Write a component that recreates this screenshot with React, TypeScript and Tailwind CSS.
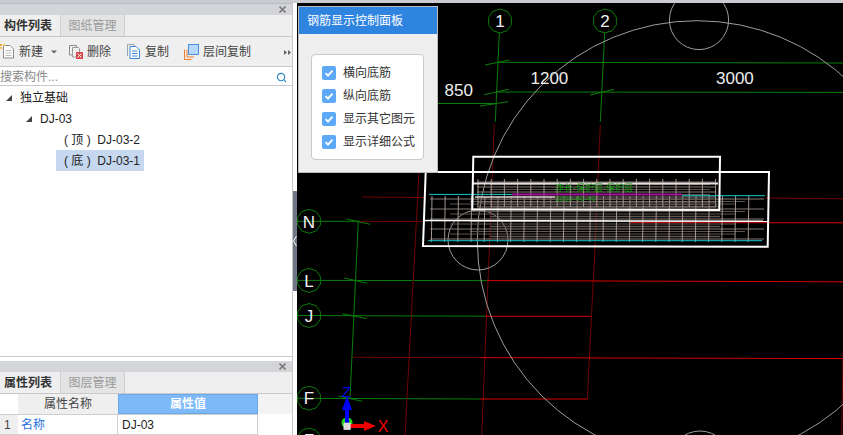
import React from "react";
import { Search } from "lucide-react";

const FONT = { fontFamily: '"Liberation Sans","Noto Sans CJK SC",sans-serif' };

function poly(cx: number, cy: number, r: number) {
  const pts: string[] = [];
  for (let i = 0; i < 10; i++) {
    const a = (i * Math.PI) / 5 - Math.PI / 2;
    pts.push(`${(cx + r * Math.cos(a)).toFixed(1)},${(cy + r * Math.sin(a)).toFixed(1)}`);
  }
  return pts.join(" ");
}

type L = [number, number, number, number];
const GREEN = "#0a7f0a";
const DRED = "#6e0505";
const RED = "#d80000";
const ARC = "#9c9c9c";

const greenLines: L[] = [
  [499.3, 32.7, 495.3, 121.7], [604.7, 32.7, 600.3, 121.7],
  [497, 62.3, 843, 63], [497, 92, 843, 92.4], [437, 103.5, 497, 103.5],
  [485, 65, 509.3, 60], [484, 94.7, 508.7, 89.3], [480, 106, 508.3, 101.7], [590, 95, 614, 89.3],
  [358.3, 221.3, 350, 398],
  [346.7, 219, 370, 224.3], [344.3, 278, 367.3, 283.3], [342.3, 313.7, 366.7, 318.7], [338.3, 396, 362.3, 401.3],
  [297, 221.3, 360, 221.3], [297, 280.4, 487, 280.6], [297, 315.5, 485, 316.2], [297, 398.3, 480, 399],
];
const dredLines: L[] = [
  [494.3, 124, 490, 233], [490, 233, 481.7, 435], [600.3, 125, 595, 246.7],
  [419, 172, 405, 435], [595, 246.7, 587.3, 399], [843, 353, 841.7, 435],
  [362, 197, 425, 197.5], [353, 357.3, 480, 357.6], [360, 221.3, 425, 221.5], [765, 198, 843, 198.8],
];
const redLines: L[] = [
  [487, 280.6, 843, 281.8], [485, 316.2, 590.7, 316.3], [480, 357.6, 843, 358.6], [480, 399, 587.3, 399],
  [630, 222.6, 843, 222.8],
];

const range = (a: number, b: number, s: number) => {
  const r: number[] = [];
  for (let x = a; x <= b; x += s) r.push(x);
  return r;
};

function Cad() {
  return (
    <svg viewBox="297 3 546 432" className="block w-full h-full" fill="none">
      {greenLines.map((l, i) => (
        <line key={i} x1={l[0]} y1={l[1]} x2={l[2]} y2={l[3]} stroke={GREEN} strokeWidth={1} />
      ))}
      {dredLines.map((l, i) => (
        <line key={i} x1={l[0]} y1={l[1]} x2={l[2]} y2={l[3]} stroke={DRED} strokeWidth={1} />
      ))}
      {redLines.map((l, i) => (
        <line key={i} x1={l[0]} y1={l[1]} x2={l[2]} y2={l[3]} stroke={RED} strokeWidth={1} />
      ))}
      <circle cx={697} cy={240.4} r={219.7} stroke={ARC} />
      <circle cx={699} cy={20} r={29.6} stroke={ARC} />
      <circle cx={700} cy={461} r={30} stroke={ARC} />
      <circle cx={478} cy={240} r={30} stroke={ARC} />

      {/* rebar: lower mat */}
      {range(199, 239, 2.5).map((y, i) => {
        const k = i % 4;
        const x1 = k === 0 ? 430 : k === 1 ? 470 : k === 2 ? 450 : 490;
        const x2 = k === 0 ? 764 : k === 1 ? 745 : k === 2 ? 735 : 720;
        return <line key={y} x1={x1} y1={y} x2={x2} y2={y} stroke={k === 0 ? "#857a75" : "#5d5451"} strokeWidth={k === 3 ? 1.5 : 1} />;
      })}
      {range(432, 762, 13.2).map((x) => (
        <line key={x} x1={x} y1={196} x2={x - 0.6} y2={242} stroke="#a3958f" />
      ))}
      {/* rebar: upper mat */}
      {range(182, 207, 2.5).map((y, i) => (
        <line key={y} x1={i % 2 ? 490 : 477} y1={y} x2={i % 2 ? 710 : 716} y2={y} stroke={i % 2 ? "#5d5451" : "#857a75"} />
      ))}
      {range(478, 716, 13.2).map((x) => (
        <line key={x} x1={x} y1={179} x2={x} y2={207} stroke="#a3958f" />
      ))}
      <line x1={473} y1={183.5} x2={718} y2={183.5} stroke="#e4dfdc" strokeWidth={2} />
      <line x1={475} y1={197} x2={555} y2={197} stroke="#d0c8c3" strokeWidth={1.5} />

      <line x1={429} y1={194.4} x2={512} y2={194.4} stroke="#16c8c8" />
      <line x1={682} y1={195.7} x2={765} y2={195.7} stroke="#16c8c8" />
      <line x1={428} y1={240.7} x2={762} y2={240.7} stroke="#16c8c8" />
      <line x1={512} y1={194.6} x2={682} y2={194.6} stroke="#a0189a" strokeWidth={2} />

      <polygon points="425.7,172 769,172 767.7,246.7 423,246" stroke="#fff" strokeWidth={2} />
      <polygon points="473.3,156.7 720,156.7 719.3,210 472.3,209.3" stroke="#fff" strokeWidth={2} />
      <line x1={424} y1={220.6} x2={768} y2={221.2} stroke="#fff" strokeWidth={1.5} />

      <text x={555} y={191} fontSize={9} fill="#0f9a0f" style={FONT}>净长-保护层-保护层</text>
      <text x={555} y={201} fontSize={8} fill="#0f9a0f" style={FONT}>3900-40-40</text>

      {[
        [500, 21, "1"], [605, 21, "2"], [309, 221.3, "N"], [309, 280.4, "L"], [309, 315.5, "J"], [309, 398.2, "F"], [309, 440, "F"],
      ].map(([x, y, t]) => (
        <g key={String(y) + t}>
          <polygon points={poly(x as number, y as number, 12)} stroke="#0a7a0a" fill={(y as number) < 100 ? "#000" : "none"} />
          <text x={x as number} y={(y as number) + 6.2} textAnchor="middle" fontSize={17} fill="#f2f2f2" style={FONT}>{t}</text>
        </g>
      ))}
      <text x={444.5} y={95.5} fontSize={17} fill="#eee" style={FONT}>850</text>
      <text x={530.5} y={84} fontSize={17} fill="#eee" style={FONT}>1200</text>
      <text x={716} y={84} fontSize={17} fill="#eee" style={FONT}>3000</text>

      {/* axis gizmo */}
      <circle cx={347} cy={422.7} r={5.5} fill="#1ed81e" />
      <line x1={347} y1={405} x2={347} y2={423} stroke="#0000ff" strokeWidth={4} />
      <polygon points="347,396 342,410 352,410" fill="#0000ff" />
      <line x1={350} y1={426} x2={366} y2={426} stroke="#f00000" strokeWidth={4} />
      <polygon points="376,426 364,421 364,431" fill="#f00000" />
      <rect x={343.5} y={422.7} width={7.2} height={7.2} fill="#dcdcdc" />
      <text x={346.7} y={397} textAnchor="middle" fontSize={15} fill="#0000e6" style={FONT}>Z</text>
      <text x={383} y={432} textAnchor="middle" fontSize={16} fill="#f00000" style={FONT}>X</text>
    </svg>
  );
}

function TitleBar() {
  return (
    <div className="flex h-[11px] shrink-0 items-center justify-end bg-[#d4d5d9] pr-[6px]">
      <svg width="7" height="7" viewBox="0 0 7 7"><path d="M0.5 0.5L6.5 6.5M6.5 0.5L0.5 6.5" stroke="#7d7d7d" strokeWidth="1.6" /></svg>
    </div>
  );
}

function Tabs({ a, b, h }: { a: string; b: string; h: string }) {
  return (
    <div className={`flex ${h} shrink-0 border-b border-[#c9c9c9] bg-[#efefef] text-xs`}>
      <div className="flex w-[60px] items-center pl-[4px] font-bold text-[#333]">{a}</div>
      <div className="flex w-[65px] items-center justify-center border-x border-[#cfcfcf] bg-[#e4e4e4] text-[#9a9a9a]">{b}</div>
    </div>
  );
}

function IconNew() {
  return (
    <svg width="15" height="15" viewBox="0 0 15 15" fill="none">
      <path d="M3.5 1.5H10L13.5 5V14H3.5Z" fill="#fff" stroke="#8b8b8b" />
      <path d="M5.5 6.5H11.5M5.5 9H11.5M5.5 11.5H11.5" stroke="#b9b9b9" />
      <rect x="0" y="0" width="2" height="2" fill="#f2a33a" />
      <rect x="3" y="0" width="2" height="2" fill="#f7c65f" />
      <rect x="0" y="3" width="2" height="2" fill="#f7c65f" />
    </svg>
  );
}
function IconDelete() {
  return (
    <svg width="16" height="15" viewBox="0 0 16 15" fill="none">
      <path d="M1.5 1.5H8.5V11H1.5Z" stroke="#8d8d8d" />
      <path d="M4.5 3.5H10.5L11.5 4.5V13H4.5Z" fill="#f3f3f3" stroke="#9a9a9a" />
      <rect x="8" y="8" width="7" height="7" fill="#d9474c" />
      <path d="M9.5 9.5L13.5 13.5M13.5 9.5L9.5 13.5" stroke="#fff" />
    </svg>
  );
}
function IconCopy() {
  return (
    <svg width="13" height="15" viewBox="0 0 13 15" fill="none">
      <path d="M0.5 0.5H7V2.5" stroke="#9aa5b3" />
      <path d="M0.5 0.5V12" stroke="#9aa5b3" />
      <path d="M3 2.5H9L12.5 6V14.5H3Z" fill="#fff" stroke="#3d86d3" />
      <path d="M5 7H10.5M5 9.5H10.5M5 12H10.5" stroke="#3d86d3" />
    </svg>
  );
}
function IconFloor() {
  return (
    <svg width="15" height="16" viewBox="0 0 15 16" fill="none">
      <path d="M0.5 5.5V15.5H7.5" stroke="#ee7d2b" />
      <path d="M3 5.5V13H10" stroke="#ee7d2b" />
      <rect x="4.5" y="0.5" width="10" height="10" fill="#b8d8fb" stroke="#4a90dc" />
    </svg>
  );
}

function Check({ label }: { label: string }) {
  return (
    <div className="flex h-[23px] items-center pl-[10px] text-xs text-[#333]">
      <span className="flex h-[14px] w-[14px] items-center justify-center rounded-[2px] bg-[#5ea9f7]">
        <svg width="10" height="10" viewBox="0 0 10 10" fill="none"><path d="M1.5 5.2L4 7.6L8.5 2.6" stroke="#fff" strokeWidth="1.8" /></svg>
      </span>
      <span className="ml-[7px]">{label}</span>
    </div>
  );
}

export default function App() {
  return (
    <div className="flex h-[435px] w-[843px] flex-col overflow-hidden bg-white" style={FONT}>
      <div className="h-[3px] shrink-0 bg-[#cbccd2]" />
      <div className="flex min-h-0 flex-1">
        <div className="flex w-[293px] shrink-0 flex-col border-r border-[#c8c8c8]">
          <div className="h-[1px] shrink-0 bg-[#b9bcc4]" />
          <TitleBar />
          <Tabs a="构件列表" b="图纸管理" h="h-[22px]" />
          <div className="relative flex h-[30px] shrink-0 items-center border-b border-[#c9c9c9] bg-[#efefef] text-xs text-[#444]">
            <div className="ml-0 flex w-[68px] items-center gap-[4px]">
              <IconNew />
              <span>新建</span>
              <svg className="ml-[4px]" width="6" height="4" viewBox="0 0 6 4"><path d="M0 0.5H6L3 3.5Z" fill="#666" /></svg>
            </div>
            <div className="flex w-[59px] items-center gap-[3px]"><IconDelete /><span>删除</span></div>
            <div className="flex w-[57px] items-center gap-[5px]"><IconCopy /><span>复制</span></div>
            <div className="flex items-center gap-[4px]"><IconFloor /><span>层间复制</span></div>
            <svg className="absolute left-[284px] top-[13px]" width="7" height="5" viewBox="0 0 7 5"><path d="M0 0L3 2.5L0 5ZM4 0L7 2.5L4 5Z" fill="#666" /></svg>
          </div>
          <div className="flex h-[19px] shrink-0 items-center justify-between border-b border-[#c9c9c9] bg-white pr-[5px] pt-[2px] text-xs text-[#8a8a8a]">
            <span>搜索构件...</span>
            <Search size={11} color="#2a86c6" strokeWidth={2.4} />
          </div>
          <div className="flex-1 border-b border-[#c9c9c9] pt-[1px] text-xs text-[#222]">
            <div className="flex h-[21px] items-center pl-[6px]">
              <svg width="6" height="6" viewBox="0 0 6 6"><path d="M6 0V6H0Z" fill="#444" /></svg>
              <span className="ml-[8px]">独立基础</span>
            </div>
            <div className="flex h-[21px] items-center pl-[26px]">
              <svg width="6" height="6" viewBox="0 0 6 6"><path d="M6 0V6H0Z" fill="#444" /></svg>
              <span className="ml-[8px]">DJ-03</span>
            </div>
            <div className="ml-[56px] flex h-[21px] w-[88px] items-center whitespace-pre pl-[8px]">( 顶 )  DJ-03-2</div>
            <div className="ml-[56px] flex h-[21px] w-[88px] items-center whitespace-pre bg-[#c6d8f0] pl-[8px]">( 底 )  DJ-03-1</div>
          </div>
          <div className="h-[4px] shrink-0 bg-white" />
          <TitleBar />
          <Tabs a="属性列表" b="图层管理" h="h-[22px]" />
          <div className="grid shrink-0 grid-cols-[18px_100px_140px_1fr] text-xs">
            <div className="h-[20px] bg-white" />
            <div className="flex h-[20px] items-center justify-center bg-[#efefef] text-[#444]">属性名称</div>
            <div className="flex h-[20px] items-center justify-center border border-[#6aa9ee] bg-[#7db8f8] font-bold text-white">属性值</div>
            <div className="h-[20px] bg-[#f3f3f3]" />
            <div className="flex h-[21px] items-center border-y border-[#cfcfcf] bg-[#efefef] pl-[4px] text-[#444]">1</div>
            <div className="flex h-[21px] items-center border-y border-r border-[#cfcfcf] pl-[3px] text-[#1f6fe0]">名称</div>
            <div className="flex h-[21px] items-center border-y border-r border-[#cfcfcf] pl-[4px] text-[#222]">DJ-03</div>
            <div className="h-[21px]" />
          </div>
        </div>
        <div className="relative w-[4px] shrink-0 bg-white">
          <div className="mt-[188px] flex h-[100px] items-center justify-center bg-[#6f7684]">
            <svg width="4" height="12" viewBox="0 0 4 12"><path d="M3.5 1L0.5 6L3.5 11" stroke="#fff" fill="none" strokeWidth="1" /></svg>
          </div>
        </div>
        <div className="relative min-w-0 flex-1 bg-black">
          <Cad />
          <div className="absolute left-[2px] top-[4px] h-[165px] w-[138px] bg-[#eeeeee] shadow-[0_0_0_1px_#bbbbbb]">
            <div className="flex h-[27px] items-center bg-[#2f84e0] pl-[8px] text-xs text-white">钢筋显示控制面板</div>
            <div className="ml-[12px] mt-[20px] flex h-[106px] w-[113px] flex-col justify-center rounded-[4px] border border-[#c9c9c9] bg-white">
              <Check label="横向底筋" />
              <Check label="纵向底筋" />
              <Check label="显示其它图元" />
              <Check label="显示详细公式" />
            </div>
          </div>
        </div>
      </div>
    </div>
  );
}
